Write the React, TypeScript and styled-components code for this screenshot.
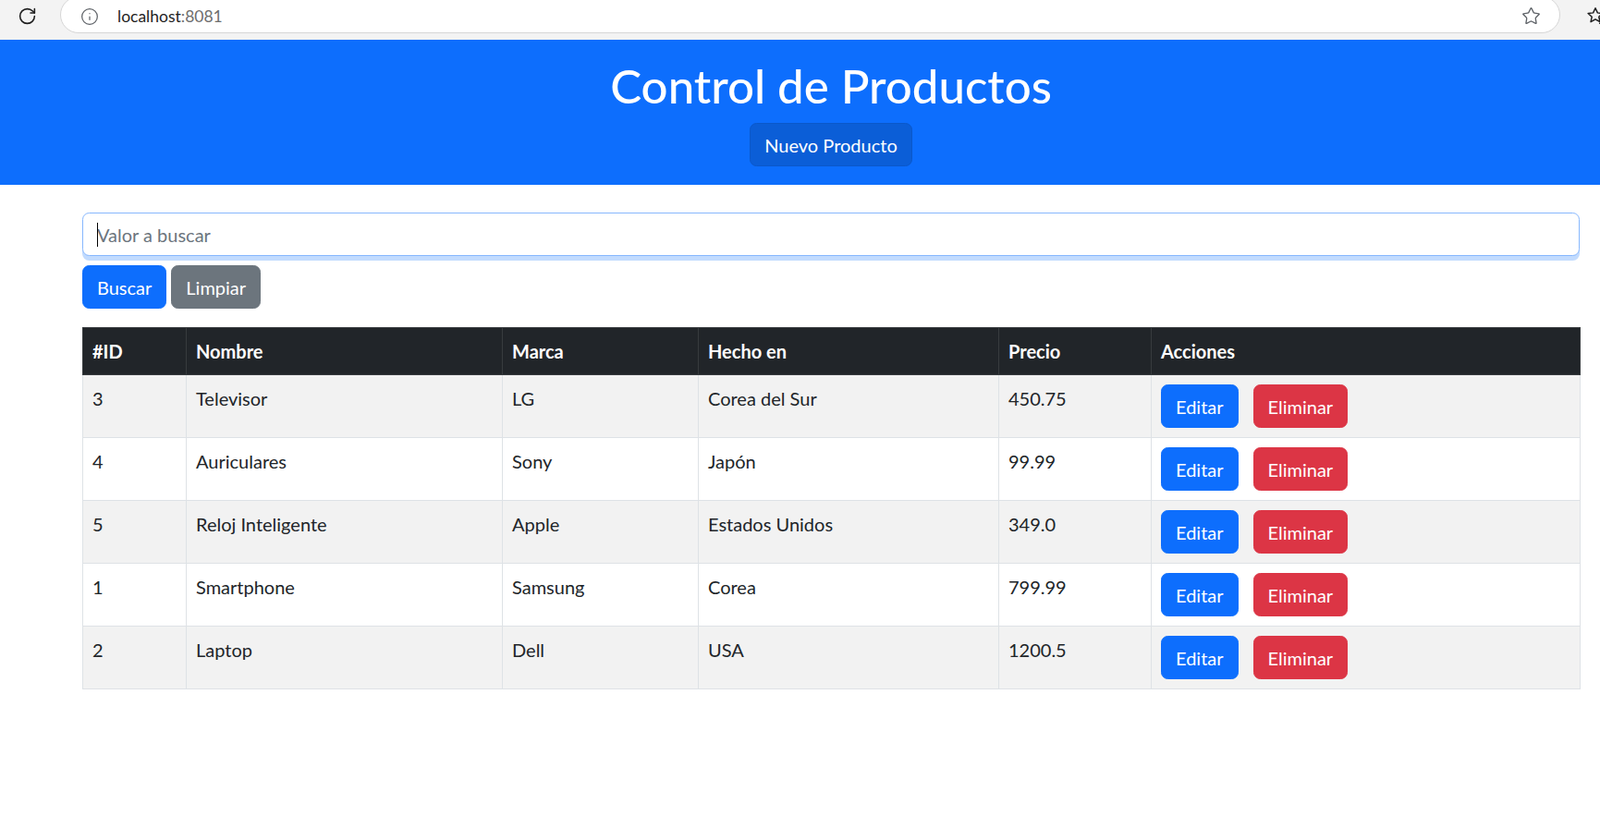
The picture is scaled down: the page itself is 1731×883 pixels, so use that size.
import React from "react";
import styled, { createGlobalStyle } from "styled-components";
import { RotateCw, Info, Star } from "lucide-react";

const GlobalStyle = createGlobalStyle`
  html, body { margin: 0; padding: 0; background: #fff; overflow: hidden; }
  body { font-family: Lato, "Noto Sans", sans-serif; color: #212529; }
  *, *::before, *::after { box-sizing: border-box; }
`;

const Page = styled.div`
  width: 1798px;
  min-height: 883px;
`;

/* ---------- browser chrome ---------- */
const Toolbar = styled.div`
  display: flex;
  align-items: flex-start;
  height: 43px;
  background: #f3f3f3;
  overflow: hidden;
`;

const ToolSlot = styled.div<{ $w: number; $ml?: number }>`
  width: ${(p) => p.$w}px;
  margin-left: ${(p) => p.$ml ?? 0}px;
  height: 34px;
  display: flex;
  align-items: center;
  justify-content: center;
  color: #1f1f1f;
  flex-shrink: 0;
`;

const Omnibox = styled.div`
  width: 1623px;
  height: 40px;
  margin: -4px 0 0 7px;
  padding: 3px 20px 0 21px;
  border: 1px solid #d6d6d6;
  border-radius: 20px;
  background: #fff;
  display: flex;
  align-items: center;
  gap: 20px;
  flex-shrink: 0;
  color: #5f6368;
`;

const Url = styled.div`
  flex: 1;
  font-size: 17.5px;
  color: #1f1f1f;
  white-space: nowrap;
  span { color: #6e6e6e; }
`;

/* ---------- header ---------- */
const Header = styled.header`
  background: #0d6efd;
  color: #fff;
  text-align: center;
  padding: 20px 0;
`;

const Title = styled.h1`
  margin: 0 0 10px;
  font-size: 51px;
  font-weight: 500;
  line-height: 60px;
`;

type Variant = "primary" | "primaryDark" | "secondary" | "danger";
const palette: Record<Variant, [string, string]> = {
  primary: ["#0d6efd", "#0d6efd"],
  primaryDark: ["#0b5ed7", "#0a58ca"],
  secondary: ["#6c757d", "#6c757d"],
  danger: ["#dc3545", "#dc3545"],
};

const Button = styled.button<{ $variant: Variant }>`
  font-family: inherit;
  font-size: 20px;
  font-weight: 400;
  line-height: 30px;
  padding: 7.5px 15px;
  border: 1px solid ${(p) => palette[p.$variant][1]};
  border-radius: 7.5px;
  background: ${(p) => palette[p.$variant][0]};
  color: #fff;
  cursor: pointer;
  white-space: nowrap;
`;

/* ---------- main ---------- */
const Main = styled.main`
  width: 1620px;
  margin: 30px auto 0;
`;

const SearchField = styled.div`
  position: relative;
`;

const SearchInput = styled.input`
  display: block;
  width: 100%;
  height: 47px;
  padding: 7.5px 15px;
  font-family: inherit;
  font-size: 20px;
  line-height: 30px;
  color: #212529;
  background: #fff;
  border: 1px solid #86b7fe;
  border-radius: 7.5px;
  box-shadow: 0 5px 0 rgba(13, 110, 253, 0.25);
  outline: none;
  &::placeholder { color: #6c757d; }
`;

const Caret = styled.span`
  position: absolute;
  left: 16px;
  top: 11px;
  width: 1px;
  height: 26px;
  background: #000;
`;

const ButtonRow = styled.div`
  display: flex;
  gap: 5px;
  margin-top: 10px;
`;

const Table = styled.table`
  width: 100%;
  margin-top: 20px;
  border-collapse: collapse;
  table-layout: fixed;
  font-size: 20px;
  line-height: 30px;
`;

const Th = styled.th`
  background: #212529;
  color: #fff;
  padding: 10px;
  text-align: left;
  font-weight: 700;
  vertical-align: bottom;
  border: 1px solid #373b3e;
`;

const Row = styled.tr<{ $striped: boolean }>`
  background: ${(p) => (p.$striped ? "#f2f2f2" : "#fff")};
`;

const Td = styled.td`
  padding: 10px;
  vertical-align: top;
  border: 1px solid #dee2e6;
  color: #212529;
`;

const Actions = styled.div`
  display: flex;
  gap: 16px;
`;

const FavIcon = () => (
  <svg width="22" height="22" viewBox="0 0 24 24" fill="none" stroke="#1f1f1f" strokeWidth="1.6" strokeLinejoin="round" strokeLinecap="round">
    <path d="M12 3l2.6 5.6 6 .6-4.5 4.1 1.3 6-5.4-3.2-5.4 3.2 1.3-6L3.4 9.2l6-.6z" />
    <path d="M17 15h6M18 18h5M17 21h6" />
  </svg>
);

const columns = [
  { label: "#ID", w: 112 },
  { label: "Nombre", w: 342 },
  { label: "Marca", w: 212 },
  { label: "Hecho en", w: 325 },
  { label: "Precio", w: 165 },
  { label: "Acciones", w: 464 },
];

const products = [
  { id: 3, nombre: "Televisor", marca: "LG", hecho: "Corea del Sur", precio: "450.75" },
  { id: 4, nombre: "Auriculares", marca: "Sony", hecho: "Japón", precio: "99.99" },
  { id: 5, nombre: "Reloj Inteligente", marca: "Apple", hecho: "Estados Unidos", precio: "349.0" },
  { id: 1, nombre: "Smartphone", marca: "Samsung", hecho: "Corea", precio: "799.99" },
  { id: 2, nombre: "Laptop", marca: "Dell", hecho: "USA", precio: "1200.5" },
];

export default function App() {
  return (
    <Page>
      <GlobalStyle />
      <Toolbar>
        <ToolSlot $w={58}>
          <RotateCw size={21} strokeWidth={1.8} />
        </ToolSlot>
        <Omnibox>
          <Info size={20} strokeWidth={1.5} />
          <Url>
            localhost<span>:8081</span>
          </Url>
          <Star size={21} strokeWidth={1.5} />
        </Omnibox>
        <ToolSlot $w={22} $ml={27}>
          <FavIcon />
        </ToolSlot>
      </Toolbar>

      <Header>
        <Title>Control de Productos</Title>
        <Button $variant="primaryDark">Nuevo Producto</Button>
      </Header>

      <Main>
        <SearchField>
          <SearchInput placeholder="Valor a buscar" />
          <Caret />
        </SearchField>
        <ButtonRow>
          <Button $variant="primary">Buscar</Button>
          <Button $variant="secondary">Limpiar</Button>
        </ButtonRow>

        <Table>
          <colgroup>
            {columns.map((c) => (
              <col key={c.label} style={{ width: c.w }} />
            ))}
          </colgroup>
          <thead>
            <tr>
              {columns.map((c) => (
                <Th key={c.label}>{c.label}</Th>
              ))}
            </tr>
          </thead>
          <tbody>
            {products.map((p, i) => (
              <Row key={p.id} $striped={i % 2 === 0}>
                <Td>{p.id}</Td>
                <Td>{p.nombre}</Td>
                <Td>{p.marca}</Td>
                <Td>{p.hecho}</Td>
                <Td>{p.precio}</Td>
                <Td>
                  <Actions>
                    <Button $variant="primary">Editar</Button>
                    <Button $variant="danger">Eliminar</Button>
                  </Actions>
                </Td>
              </Row>
            ))}
          </tbody>
        </Table>
      </Main>
    </Page>
  );
}
